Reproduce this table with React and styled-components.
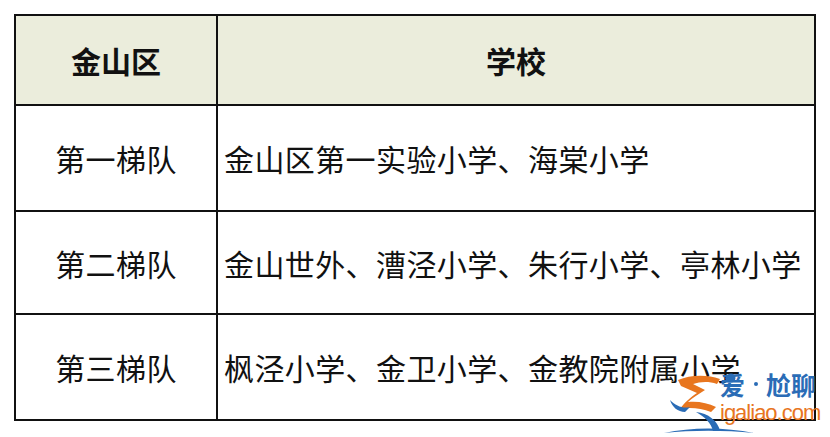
import React from 'react'
import styled, { createGlobalStyle } from 'styled-components'

const GlobalStyle = createGlobalStyle`
  html, body {
    margin: 0;
    padding: 0;
    background: #fff;
  }
  body {
    font-family: "Noto Sans CJK SC", "Noto Sans", sans-serif;
  }
`

const Page = styled.div`
  position: relative;
  width: 830px;
  height: 437px;
  overflow: hidden;
  padding: 14px 0 0 14px;
  box-sizing: border-box;
`

const Table = styled.div`
  display: grid;
  grid-template-columns: 202px 598px;
  grid-template-rows: 90px 106px 103px 106px;
  border-top: 2px solid #111;
  border-left: 2px solid #111;
  width: max-content;
`

const Cell = styled.div`
  display: flex;
  align-items: center;
  justify-content: ${p => (p.$center ? 'center' : 'flex-start')};
  padding-left: ${p => (p.$center ? '0' : '6px')};
  border-right: 2px solid #111;
  border-bottom: 2px solid #111;
  background: ${p => (p.$head ? '#ebeddc' : '#fff')};
  font-size: 30px;
  font-weight: ${p => (p.$head ? 700 : 400)};
  letter-spacing: ${p => (p.$head ? '0' : '0.4px')};
  color: #111;
  white-space: nowrap;
`

const Watermark = styled.div`
  position: absolute;
  left: 662px;
  top: 371px;
  width: 168px;
  height: 66px;
`

const Mark = styled.svg`
  width: 92px;
  height: 65px;
  display: block;
`

const Brand = styled.div`
  position: absolute;
  left: 58px;
  top: 0;
  display: flex;
  flex-direction: column;
  line-height: 1;
`

const BrandName = styled.div`
  display: flex;
  align-items: center;
  height: 26px;
  color: #2a6cb6;
  font-size: 25px;
  font-weight: 700;
  white-space: nowrap;
`

const Dot = styled.span`
  display: inline-block;
  width: 4px;
  height: 4px;
  border-radius: 50%;
  background: #2a6cb6;
  margin: 0 8px 0 9px;
`

const BrandUrl = styled.span`
  color: #e8761f;
  font-family: "Liberation Sans", Arial, sans-serif;
  font-size: 22px;
  letter-spacing: -1px;
  margin-top: 5px;
  white-space: nowrap;
`

const rows = [
  ['第一梯队', '金山区第一实验小学、海棠小学'],
  ['第二梯队', '金山世外、漕泾小学、朱行小学、亭林小学'],
  ['第三梯队', '枫泾小学、金卫小学、金教院附属小学'],
]

export default function App() {
  return (
    <Page>
      <GlobalStyle />
      <Table>
        <Cell $head $center>金山区</Cell>
        <Cell $head $center>学校</Cell>
        {rows.map(([tier, schools]) => (
          <React.Fragment key={tier}>
            <Cell $center>{tier}</Cell>
            <Cell>{schools}</Cell>
          </React.Fragment>
        ))}
      </Table>
      <Watermark>
        <Mark viewBox="0 0 92 65">
          {/* orange figure */}
          <path d="M16 9 C28 4 44 3 58 8 L55 13 C46 10 38 11 31 13 L43 19 C37 23 30 27 26 31 C36 30 46 32 54 36 L49 41 C39 37 27 36 18 38 C22 32 29 26 35 22 L19 15 Z" fill="#e8761f" />
          {/* head */}
          <circle cx="69" cy="7" r="4.5" fill="#2a6cb6" />
          {/* blue blades */}
          <path d="M8 29 C14 35 21 38 28 36 L23 41 C16 41 10 36 8 29 Z" fill="#2a6cb6" />
          <path d="M34 41 C46 42 56 50 58 60 L51 60 C49 52 43 46 34 41 Z" fill="#2a6cb6" />
          {/* swoosh */}
          <path d="M2 62 C30 56 62 56 92 62 C62 59 30 59 2 62 Z" fill="#2a6cb6" />
        </Mark>
        <Brand>
          <BrandName>爱<Dot />尬聊</BrandName>
          <BrandUrl>igaliao.com</BrandUrl>
        </Brand>
      </Watermark>
    </Page>
  )
}
